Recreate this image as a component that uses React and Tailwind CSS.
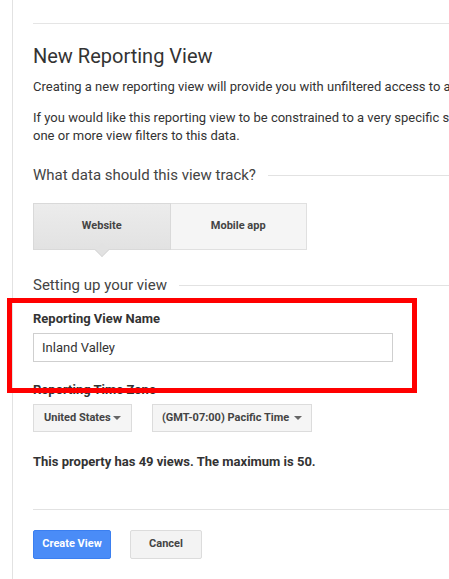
import React from "react";

function Caret() {
  return (
    <span className="inline-block w-0 h-0 border-l-[4px] border-r-[4px] border-t-[4px] border-l-transparent border-r-transparent border-t-[#666]" />
  );
}

export default function App() {
  return (
    <div
      className="relative w-[449px] h-[579px] overflow-hidden bg-white"
      style={{ fontFamily: "Roboto, 'Liberation Sans', Arial, sans-serif" }}
    >
      <div className="ml-[12px] h-full border-l border-[#e2e2e2] pl-[20px] pt-[23px]">
        <div className="w-[416px] border-t border-[#e5e5e5]">
          <h1 className="mt-[20px] text-[20px] leading-[24px] text-[#333] font-normal">
            New Reporting View
          </h1>
          <p className="mt-[10px] text-[13px] leading-[18px] text-[#333] whitespace-nowrap">
            Creating a new reporting view will provide you with unfiltered access to a
          </p>
          <p className="mt-[13px] text-[13px] leading-[18px] text-[#333] whitespace-nowrap">
            If you would like this reporting view to be constrained to a very specific s
            <br />
            one or more view filters to this data.
          </p>

          <div className="mt-[20px] flex items-center gap-[12px]">
            <span className="text-[15px] leading-[20px] text-[#444] whitespace-nowrap">
              What data should this view track?
            </span>
            <div className="flex-1 h-px bg-[#e2e2e2]" />
          </div>

          <div className="mt-[18px] flex w-[274px] h-[47px]">
            <div className="relative flex-1 flex items-center justify-center border border-[#d9d9d9] bg-gradient-to-b from-[#ececec] to-[#e2e2e2] text-[11px] font-bold text-[#444]">
              Website
              <div className="absolute left-1/2 -bottom-[6px] -ml-[5px] w-[10px] h-[10px] rotate-45 bg-[#e2e2e2] border-r border-b border-[#d9d9d9]" />
            </div>
            <div className="flex-1 flex items-center justify-center border border-l-0 border-[#e0e0e0] bg-[#f5f5f5] text-[11px] font-bold text-[#444]">
              Mobile app
            </div>
          </div>

          <div className="mt-[25px] flex items-center gap-[12px]">
            <span className="text-[15px] leading-[20px] text-[#444] whitespace-nowrap">
              Setting up your view
            </span>
            <div className="flex-1 h-px bg-[#e2e2e2]" />
          </div>

          <div className="mt-[16px] text-[13px] leading-[16px] font-bold text-[#333]">
            Reporting View Name
          </div>
          <div className="mt-[6px] w-[360px] h-[29px] border border-[#cfcfcf] flex items-center px-[8px] text-[13px] text-[#333]">
            Inland Valley
          </div>

          <div className="mt-[20px] text-[13px] leading-[16px] font-bold text-[#333]">
            Reporting Time Zone
          </div>
          <div className="mt-[6px] flex gap-[20px]">
            <div className="w-[99px] h-[28px] flex items-center justify-between pl-[10px] pr-[10px] border border-[#dcdcdc] bg-[#f5f5f5] text-[11px] font-bold text-[#444] whitespace-nowrap">
              <span>United States</span>
              <Caret />
            </div>
            <div className="w-[160px] h-[28px] flex items-center justify-between pl-[9px] pr-[9px] border border-[#dcdcdc] bg-[#f5f5f5] text-[11px] font-bold text-[#444] whitespace-nowrap">
              <span>(GMT-07:00) Pacific Time</span>
              <Caret />
            </div>
          </div>

          <div className="mt-[22px] text-[13px] leading-[16px] font-bold text-[#333] whitespace-nowrap">
            This property has 49 views. The maximum is 50.
          </div>

          <div className="mt-[39px] border-t border-[#e2e2e2]" />

          <div className="mt-[20px] flex gap-[19px]">
            <button className="w-[78px] h-[29px] rounded-[2px] border border-[#3b7ff0] bg-[#4a8cf7] text-white text-[11px] font-bold">
              Create View
            </button>
            <button className="w-[72px] h-[29px] rounded-[2px] border border-[#dcdcdc] bg-[#f3f3f3] text-[#444] text-[11px] font-bold">
              Cancel
            </button>
          </div>
        </div>
      </div>

      <div className="absolute left-[7px] top-[298px] w-[410px] h-[95px] border-[5px] border-[#ff0000]" />
    </div>
  );
}
